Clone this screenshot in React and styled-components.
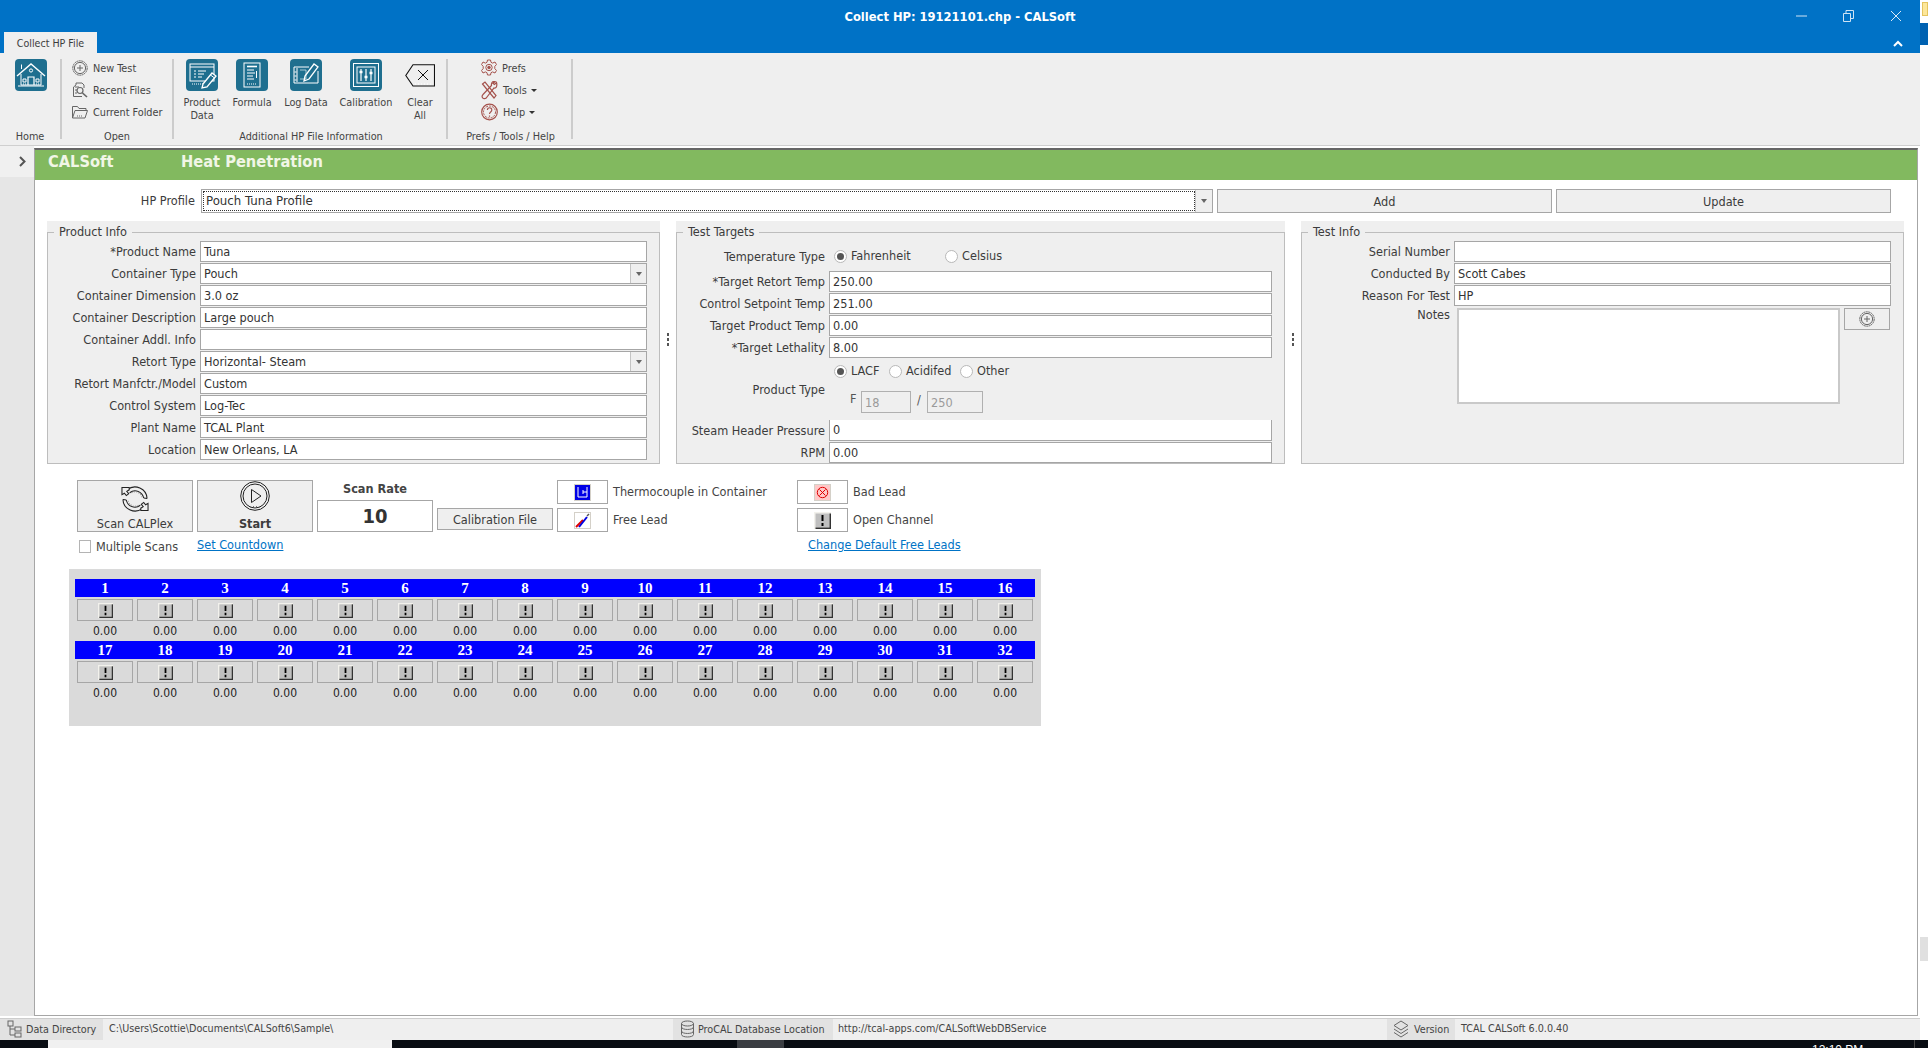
import React from "react";
import styled, { createGlobalStyle } from "styled-components";

const FONT = '"DejaVu Sans Condensed", Tahoma, "DejaVu Sans", sans-serif';

const Global = createGlobalStyle`
  html, body { margin: 0; padding: 0; background: #fff; overflow: hidden; }
  body { font-family: ${FONT}; font-size: 12.6px; color: #3c3c3c; }
  * { box-sizing: border-box; }
`;

const Desktop = styled.div`
  width: 1928px; height: 1048px; display: grid;
  grid-template-columns: 1920px 8px; grid-template-rows: 1040px 8px; overflow: hidden;
`;
const Win = styled.div`display: flex; flex-direction: column; min-height: 0;`;

/* ---------- title bar ---------- */
const Header = styled.header`height: 53px; background: #0072c6; display: flex; flex-direction: column;`;
const TitleRow = styled.div`height: 32px; display: grid; grid-template-columns: 1fr auto 1fr; align-items: center;`;
const Title = styled.div`color: #fff; font-weight: 700; font-size: 12.8px; grid-column: 2; padding-top: 1px;`;
const Controls = styled.div`display: flex; justify-content: flex-end; padding-right: 0;`;
const Ctl = styled.div`width: 47.5px; display: flex; justify-content: center; align-items: center; height: 32px;`;
const TabRow = styled.div`height: 21px; display: flex; justify-content: space-between; align-items: center; padding: 0 17px 0 4px;`;
const Tab = styled.div`width: 93px; height: 21px; background: #efefef; color: #3c3c3c; font-size: 10.6px; line-height: 22px; text-align: center;`;

/* ---------- ribbon ---------- */
const Ribbon = styled.div`
  height: 93px; background: #efefef; border-bottom: 1px solid #cfcfcf;
  display: flex; align-items: flex-start; padding-top: 6px;
`;
const Group = styled.section`
  width: ${p => p.$w}px; height: 86px; display: flex; flex-direction: column;
  background: ${p => (p.$sep ? "linear-gradient(#cccccc,#cccccc) right top / 2px 80px no-repeat" : "none")};
`;
const GroupBody = styled.div`height: 70px; display: flex; padding-left: ${p => p.$pl || 0}px; justify-content: ${p => p.$center ? "center" : "flex-start"};`;
const GroupLabel = styled.div`height: 14px; line-height: 15px; font-size: 10.8px; text-align: center; color: #444; padding-right: ${p => p.$pr || 0}px;`;
const BigItem = styled.div`width: ${p => p.$w}px; display: flex; flex-direction: column; align-items: center; font-size: 10.8px; line-height: 13px; text-align: center; color: #444;`;
const BigIcon = styled.div`height: 32px; margin-bottom: 5px; display: flex; align-items: center;`;
const MenuList = styled.div`display: flex; flex-direction: column; gap: 4px;`;
const MenuItem = styled.div`height: 18px; display: flex; align-items: center; gap: 5px; font-size: 10.8px; color: #444;`;
const Caret = styled.span`width: 0; height: 0; border: 3px solid transparent; border-top: 3px solid #333; border-bottom: 0; margin-left: -1px;`;

/* ---------- body ---------- */
const Body = styled.div`flex: 1; display: flex; min-height: 0;`;
const Sidebar = styled.aside`width: 34px; background: #e6e6e6; margin-bottom: 2px; display: flex; flex-direction: column;`;
const ExpandCell = styled.div`height: 31px; background: #f0f0f0; display: flex; align-items: center; justify-content: center; padding: 0 0 0 10px;`;
const Main = styled.main`
  width: 1884px; margin: 2px 0; border: 1px solid #a6a6a6; border-top: 2px solid #666;
  background: #fff; display: flex; flex-direction: column;
`;
const Banner = styled.div`
  height: 30px; background: #82b95f; display: flex; align-items: center; padding: 0 0 7px 13px;
  color: #f1f6e6; font-weight: 700; font-size: 16.3px;
`;
const BannerApp = styled.div`width: 133px;`;

const ProfileRow = styled.div`
  margin-top: 9px; display: grid; grid-template-columns: 162px 1012px 335px 335px; column-gap: 4px; height: 22px;
`;
const RightLabel = styled.div`
  text-align: right; color: #3c3c3c; line-height: 21px; white-space: nowrap; padding-right: ${p => p.$pr ?? 4}px;
`;
const ProfileLabel = styled(RightLabel)`line-height: 24px; padding-right: 2px;`;
const Combo = styled.div`border: 1px solid #a6a6a6; display: flex; background: #fff;`;
const ComboText = styled.div`flex: 1; border: 1px dotted #333; margin: 1px 0 1px 1px; padding-left: 2px; line-height: 18px; color: #333; font-size: 13.1px;`;
const ComboArrow = styled.div`width: 17px; background: #efefef; border-left: 1px solid #c4c4c4; display: flex; align-items: center; justify-content: center;`;
const Tri = styled.span`width: 0; height: 0; border: 3.5px solid transparent; border-top: 4px solid #666; border-bottom: 0;`;
const FlatButton = styled.button`
  font: inherit; color: #3c3c3c; background: #efefef; border: 1px solid #a6a6a6; padding: 0; margin: 0;
`;

const Panels = styled.div`
  margin-top: 10px; padding-left: 12px; height: 243px;
  display: grid; grid-template-columns: 613px 16px 609px 16px 603px;
`;
const Panel = styled.section`background: #efefef; padding-top: 3px; display: flex; min-width: 0;`;
const Fieldset = styled.fieldset`
  flex: 1; min-width: 0; margin: 0; padding: 1px 12px 0 0; border: 1px solid #bdbdbd;
  display: flex; flex-direction: column;
`;
const Legend = styled.legend`
  margin-left: 6px; padding: 0 5px; height: 16px; line-height: 16px; color: #3c3c3c;
`;
const Rows = styled.div`display: flex; flex-direction: column; gap: 1px;`;
const Row = styled.div`display: grid; grid-template-columns: 152px 1fr; height: 21px;`;
const Input = styled.div`
  border: 1px solid #a6a6a6; background: #fff; color: #333; line-height: 19px; padding-left: 3px;
  display: flex; justify-content: space-between; ${p => p.$noTop && "border-top: 0;"} white-space: nowrap; min-width: 0;
`;
const ComboCell = styled.div`width: 16px; background: #efefef; border-left: 1px solid #c4c4c4; display: flex; align-items: center; justify-content: center;`;
const RadioRow = styled.div`display: grid; grid-template-columns: 152px 1fr; height: ${p => p.$h}px; align-items: center;`;
const RadioLine = styled.div`display: flex; align-items: center; padding-left: 5px; grid-column: 2;`;
const RadioWrap = styled.label`display: flex; align-items: center; gap: 4px; width: ${p => p.$w}px; color: #3c3c3c; line-height: 14px;`;
const RadioDot = styled.span`
  width: 13px; height: 13px; border-radius: 50%; border: 1px solid #b8b8b8; background: #fff; display: flex; align-items: center; justify-content: center;
  &::after { content: ""; width: 7px; height: 7px; border-radius: 50%; background: ${p => (p.$on ? "#555" : "transparent")}; }
`;
const ProductType = styled.div`display: grid; grid-template-columns: 152px 1fr; grid-template-rows: 26px 7px 22px 7px;`;
const ProductLabel = styled(RightLabel)`grid-row: 1 / span 3; grid-column: 1; align-self: center; line-height: 14px; margin-top: 8px;`;
const FRow = styled.div`grid-row: 3; grid-column: 2; display: flex; align-items: center; padding-left: 21px; color: #555;`;
const FLetter = styled.span`width: 11px; margin-top: -7px;`;
const SmallBox = styled.div`
  width: ${p => p.$w}px; height: 22px; border: 1px solid #b0b0b0; background: #efefef; color: #9a9a9a; line-height: 22px; padding-left: 3px;
`;
const Slash = styled.span`width: 16px; text-align: center; margin-top: -5px;`;
const NotesRow = styled.div`display: grid; grid-template-columns: 152px 385px 46px; column-gap: 0; margin-top: 2px;`;
const NotesBox = styled.div`height: 96px; margin-left: 2.5px; width: 383px; border: 2px solid #c9c9c9; background: #fff;`;
const NotesLabel = styled(RightLabel)`line-height: 14px;`;
const NotesBtn = styled(FlatButton)`height: 22px; width: 46px; margin-left: 5px; display: flex; align-items: center; justify-content: center;`;
const Splitter = styled.div`display: flex; flex-direction: column; align-items: center; justify-content: center; gap: 2px; padding-bottom: 6px;`;
const SplitDot = styled.span`width: 2px; height: 3px; background: #555;`;

/* ---------- scan controls ---------- */
const ScanGrid = styled.div`
  margin: 16px 0 0 42px; display: grid; column-gap: 4px; row-gap: 4px;
  grid-template-columns: 116px 116px 116px 116px 51px 181px 51px auto; grid-template-rows: 24px 24px 20px;
`;
const BigButton = styled.button`
  grid-row: 1 / span 2; height: 52px; font: inherit; background: #efefef; border: 1px solid #a6a6a6; color: #3c3c3c;
  display: flex; flex-direction: column; align-items: center; padding: ${p => p.$pt}px 0 0; font-weight: ${p => p.$bold ? 700 : 400};
`;
const BigLabel = styled.span`line-height: 14px; margin-top: ${p => p.$mt}px;`;
const RateStack = styled.div`grid-row: 1 / span 2; display: flex; flex-direction: column; align-items: stretch;`;
const RateLabel = styled.div`text-align: center; font-weight: 700; color: #444; height: 21px; line-height: 17px;`;
const RateValue = styled.div`height: 32px; border: 1px solid #a6a6a6; text-align: center; font-weight: 700; font-size: 20px; line-height: 30px; color: #333; background: #fff;`;
const CalButton = styled(FlatButton)`grid-row: 2; grid-column: 4; height: 22px; width: 116px;`;
const LegendBox = styled.div`
  border: 1px solid #a6a6a6; background: #fff; height: 24px; display: flex; align-items: center; justify-content: center;
  grid-column: ${p => p.$c}; grid-row: ${p => p.$r};
`;
const LegendText = styled.div`grid-column: ${p => p.$c}; grid-row: ${p => p.$r}; line-height: 24px; padding-left: 1px; color: #444; white-space: nowrap;`;
const CheckLine = styled.label`grid-row: 3; grid-column: 1; display: flex; align-items: center; gap: 5px; padding-left: 2px; white-space: nowrap; color: #444;`;
const Check = styled.span`width: 12px; height: 13px; border: 1px solid #b4b4b4; background: #fff;`;
const LinkText = styled.a`
  color: #0073c6; text-decoration: underline; white-space: nowrap; line-height: 18px; grid-row: 3; grid-column: ${p => p.$c};
  padding-left: ${p => p.$pl || 0}px;
`;

const ChannelPanel = styled.div`
  margin: 13px 0 0 34px; width: 972px; height: 157px; background: #dadada; padding: 10px 6px 0;
`;
const Bank = styled.div`display: grid; grid-template-columns: repeat(16, 60px); grid-template-rows: 18px 24px 20px; height: 62px;`;
const ChHead = styled.div`
  background: #0000ff; color: #fff; font-family: "Liberation Serif", serif; font-weight: 700; font-size: 15px; line-height: 18px; text-align: center;
`;
const ChBtn = styled.button`
  margin: 2px 2px 0; height: 22px; width: 56px; padding: 0; background: #dadada; border: 1px solid #a6a6a6; display: flex; align-items: center; justify-content: center;
`;
const ChVal = styled.div`text-align: center; color: #1e1e1e; line-height: 20px; font-size: 12px;`;

/* ---------- status bar ---------- */
const Status = styled.footer`height: 22px; border-top: 1px solid #cdcdcd; background: #efefef; display: flex; font-size: 10.7px; color: #444;`;
const StatusKey = styled.div`width: ${p => p.$w}px; background: #e2e2e2; display: flex; align-items: center; gap: ${p => p.$gap || 3}px; padding: 0 0 1px ${p => p.$pl}px; white-space: nowrap;`;
const StatusVal = styled.div`width: ${p => p.$w}px; padding-left: ${p => p.$pl}px; line-height: 20px; white-space: nowrap;`;

/* ---------- right strip + taskbar ---------- */
const Strip = styled.div`display: flex; flex-direction: column; background: #fff; padding-top: 2px;`;
const Sticky = styled.div`height: 14px; margin-left: 2px; background: #fde79a; border: 1px solid #e5c45e;`;
const StripBand = styled.div`height: 22px; margin-top: 7px; background: #0062b2;`;
const StripBlock = styled.div`height: 24px; margin-top: 892px; background: #e0e0e0;`;
const Taskbar = styled.div`grid-column: 1 / span 2; height: 8px; background: #080c12; display: flex; overflow: hidden; position: relative;`;
const TaskItem = styled.div`margin-left: ${p => p.$ml}px; width: ${p => p.$w}px; background: ${p => p.$bg};`;
const Clock = styled.div`margin-left: ${p => p.$ml}px; width: 103px; color: #fff; font-size: 12px; line-height: 14px; padding-top: 3px; white-space: nowrap; border-right: 1px solid #444; font-family: "Liberation Sans", sans-serif;`;

/* ---------- icons ---------- */
const Tile = ({ children }) => (
  <svg width="32" height="32" viewBox="0 0 32 32" fill="none" stroke="#fff" strokeWidth="1">
    <rect x="0" y="0" width="32" height="32" rx="4" fill="#1f6f8f" stroke="none" />
    {children}
  </svg>
);
const HomeIcon = () => (
  <Tile>
    <path d="M2 17 16 5l14 12" strokeWidth="1.4" />
    <path d="M6.5 10V5.5M6 15v11h20V15" />
    <circle cx="16" cy="11.5" r="1.6" />
    <path d="M13 26v-8h6v8M3 27h26" strokeWidth="1.2" />
    <path d="M8 20h3v3H8zM21 20h3v3h-3z" />
    <path d="M8 25h3M21 25h3" strokeDasharray="1 1" />
  </Tile>
);
const ProductIcon = () => (
  <Tile>
    <rect x="4" y="5" width="24" height="17" />
    <path d="M4 8h24" />
    <path d="M8 12h2M8 15h2M8 18h2M12 12h8M12 15h6M12 18h4" strokeWidth="1.2" />
    <path d="M6 25h13" strokeDasharray="1 1" />
    <path d="M17 25l9-11 4 3-9 11-5 1z" fill="#1f6f8f" strokeWidth="1.3" />
    <path d="M24.5 16l4 3" />
  </Tile>
);
const FormulaIcon = () => (
  <Tile>
    <rect x="8" y="4" width="16" height="24" />
    <path d="M11 7.5h10" strokeWidth="1.6" />
    <path d="M11 11h7M11 14h8M11 17h6M11 20h7M20.5 12v7" />
    <path d="M11 25h10" strokeDasharray="1 1" />
  </Tile>
);
const LogIcon = () => (
  <Tile>
    <path d="M19 8H4v16h24V12" />
    <path d="M7 9v14M4.5 13h2M4.5 17h2M4.5 21h2" />
    <path d="M14 22l1-5 9-12 4 3-9 12z" fill="#1f6f8f" strokeWidth="1.3" />
    <path d="M10 11h6v9h-6" opacity=".6" />
  </Tile>
);
const CalIcon = () => (
  <Tile>
    <rect x="3.5" y="4.5" width="25" height="23" />
    <rect x="7" y="8" width="18" height="16" />
    <path d="M11 10v12M16 10v12M21 10v12" strokeWidth="1.2" />
    <path d="M9.5 13h3M14.5 18h3M19.5 14h3" strokeWidth="2.4" />
  </Tile>
);
const ClearIcon = () => (
  <svg width="30" height="23" viewBox="0 0 30 23" fill="none" stroke="#111">
    <path d="M29.5.7H8L.8 11.5 8 22H29.5V.7Z" strokeWidth="1.1" />
    <path d="M13 6l10 10M23 6 13 16" strokeWidth="1" />
    <path d="M10 20h17" stroke="#fff" strokeDasharray="1 2" />
  </svg>
);
const Grey = styled.svg`display: block; flex: none;`;
const NewIcon = ({ size = 16 }) => (
  <Grey width={size} height={size} viewBox="0 0 16 16" fill="none" stroke="#666">
    <circle cx="8" cy="8" r="7.2" strokeDasharray="2 .5" />
    <circle cx="8" cy="8" r="5.6" />
    <path d="M8 5v6M5 8h6" />
  </Grey>
);
const RecentIcon = () => (
  <Grey width="16" height="16" viewBox="0 0 16 16" fill="none" stroke="#666">
    <path d="M1.5 5 4 3v-2h6l2 2v3M1.5 5v9.5H10" />
    <path d="M3 5h4" />
    <circle cx="8" cy="8.5" r="3" strokeWidth="1.2" />
    <path d="M10.5 11 15 15" strokeWidth="1.6" />
    <path d="M3 8h2M3 11h2" />
  </Grey>
);
const FolderIcon = () => (
  <Grey width="16" height="16" viewBox="0 0 16 16" fill="none" stroke="#666">
    <path d="M.5 14V2.5h5l1.5 2h7v2" />
    <path d="M.5 14l2.5-7.5h12.5L13 14H.5Z" />
    <path d="M5 12h6" strokeDasharray="1 1" />
  </Grey>
);
const RED = "#a5534d";
const GearIcon = () => (
  <Grey width="16" height="18" viewBox="0 0 16 18" fill="none" stroke={RED}>
    <path d="M6.5 1h3l.5 2.3 1.6.8L14 3l1.5 2.6-1.7 1.7v2.4l1.7 1.7L14 14l-2.4-1.1-1.6.8L9.5 16h-3L6 13.7l-1.6-.8L2 14 .5 11.4l1.7-1.7V7.3L.5 5.6 2 3l2.4 1.1 1.6-.8L6.5 1Z" />
    <circle cx="8" cy="8.5" r="3.2" />
    <circle cx="8" cy="8.5" r="1.3" fill={RED} />
  </Grey>
);
const ToolsIcon = () => (
  <Grey width="17" height="19" viewBox="0 0 17 19" fill="none" stroke={RED} strokeWidth="1.2">
    <path d="M1.5 3 4 1l11 13.500-2 2.500L1.500 3Z" />
    <path d="M15.500 1.500 13.500 3.500l-1.500-1 2-2C12 0 10 1.500 10.500 4.500L2 13.500c-1.500 1.500-1 3.500.5 4s3-.5 3.500-1.500l7-9c2 .5 3.500-1.500 2.500-5.500Z" />
  </Grey>
);
const HelpIcon = () => (
  <Grey width="17" height="18" viewBox="0 0 17 18" fill="none" stroke={RED}>
    <circle cx="8.5" cy="9" r="7.8" strokeWidth="1.2" />
    <circle cx="8.5" cy="9" r="6" strokeDasharray="2 1" />
    <path d="M6.4 7c0-3 4.4-3 4.4 0 0 2-2.3 2-2.3 4M8.5 12.5v1.2" strokeWidth="1.2" />
  </Grey>
);
const ScanIcon = () => (
  <svg width="30" height="29" viewBox="0 0 30 29" fill="none" stroke="#222" strokeWidth="1.1">
    <path d="M7 5A12.500 12.500 0 0 1 27.500 14" />
    <path d="M9.500 8A9 9 0 0 1 24 13.500" />
    <path d="M24 13.500 27.500 14" />
    <path d="M11.500 8A7 7 0 0 1 22 12.500" stroke="#888" strokeDasharray="1 1.500" />
    <path d="M1.500 2.500h7.500v2.500L6.500 6.500 8.500 9 6 11 4 8.500 1.500 10Z" fill="#efefef" />
    <path d="M23 24A12.500 12.500 0 0 1 2.500 15" />
    <path d="M20.500 21A9 9 0 0 1 6 15.500" />
    <path d="M6 15.500 2.500 15" />
    <path d="M18.500 21A7 7 0 0 1 8 16.500" stroke="#888" strokeDasharray="1 1.500" />
    <path d="M28.500 26.500H21v-2.500l2.500-1.500L21.500 20l2.500-2 2 2.500 2.500-1.500Z" fill="#efefef" />
  </svg>
);
const PlayIcon = () => (
  <svg width="30" height="30" viewBox="0 0 30 30" fill="none" stroke="#222">
    <circle cx="15" cy="15" r="14.3" />
    <circle cx="15" cy="15" r="12" />
    <path d="M11.500 8.500v13L21 15l-9.500-6.500Z" />
    <path d="M10 25.500h10" stroke="#777" strokeDasharray="1 2" />
  </svg>
);
const LegendTile = styled.svg`display: block;`;
const ThermoIcon = () => (
  <LegendTile width="17" height="17" viewBox="0 0 17 17">
    <rect width="17" height="17" fill="#d4d0c8" />
    <rect x="1" y="1" width="15" height="15" fill="#0000e6" />
    <path d="M4 3v10h9V3M13 8H9M9 6v4" fill="none" stroke="#fff" strokeWidth="1" />
  </LegendTile>
);
const FreeIcon = () => (
  <LegendTile width="17" height="17" viewBox="0 0 17 17">
    <rect width="17" height="17" fill="#d4d0c8" />
    <rect x="1" y="1" width="15" height="15" fill="#fff" />
    <path d="M2 15 9 8" stroke="#e00000" strokeWidth="2" />
    <path d="M5 15 13 5" stroke="#0000e0" strokeWidth="2" />
    <path d="M13 4 15 2" stroke="#555" strokeWidth="1.5" />
  </LegendTile>
);
const BadIcon = () => (
  <LegendTile width="17" height="17" viewBox="0 0 17 17">
    <rect width="17" height="17" fill="#d4d0c8" />
    <rect x="1" y="1" width="15" height="15" fill="#ffc8c8" />
    <circle cx="8.500" cy="8.500" r="5.200" fill="none" stroke="#e00000" />
    <path d="M5.500 5.500l6 6M11.500 5.500l-6 6" stroke="#e00000" />
  </LegendTile>
);
const OpenIcon = ({ size = 17 }) => (
  <LegendTile width={size} height={size} viewBox="0 0 17 17">
    <rect width="17" height="17" fill="#f2f1ec" />
    <rect x="1.500" y="1.500" width="14" height="14" fill="#bfbfbf" />
    <rect x="15.500" y="1.500" width="1.500" height="15.500" fill="#333" />
    <rect x="1.500" y="15.500" width="15.500" height="1.500" fill="#333" />
    <path d="M8.500 3v6M8.500 11v3" stroke="#000" strokeWidth="2" />
  </LegendTile>
);
const TreeIcon = () => (
  <Grey width="15" height="18" viewBox="0 0 15 18" fill="none" stroke="#666">
    <rect x="1" y="1" width="5" height="5" />
    <rect x="8" y="7" width="6" height="4" />
    <rect x="8" y="13" width="6" height="4" />
    <path d="M3 6v9h5M3 9h5" />
  </Grey>
);
const DbIcon = () => (
  <Grey width="15" height="18" viewBox="0 0 15 18" fill="none" stroke="#666">
    <ellipse cx="7.500" cy="3.500" rx="6" ry="2.500" />
    <path d="M1.500 3.500v11c0 3.300 12 3.300 12 0v-11M1.500 7c0 3.300 12 3.300 12 0M1.500 11c0 3.300 12 3.300 12 0" />
  </Grey>
);
const StackIcon = () => (
  <Grey width="16" height="18" viewBox="0 0 16 18" fill="none" stroke="#666">
    <path d="M8 1 15 5.500 8 10 1 5.500 8 1Z" />
    <path d="M1 9l7 4.500L15 9M1 12.500 8 17l7-4.500" />
  </Grey>
);
const ChevronRight = () => (
  <svg width="7" height="11" viewBox="0 0 7 11" fill="none" stroke="#555" strokeWidth="2"><path d="M1 1l4.500 4.500L1 10" /></svg>
);

/* ---------- data ---------- */
const product = [
  ["*Product Name", "Tuna"], ["Container Type", "Pouch", true], ["Container Dimension", "3.0 oz"],
  ["Container Description", "Large pouch"], ["Container Addl. Info", ""], ["Retort Type", "Horizontal- Steam", true],
  ["Retort Manfctr./Model", "Custom"], ["Control System", "Log-Tec"], ["Plant Name", "TCAL Plant"], ["Location", "New Orleans, LA"],
];
const targets = [["*Target Retort Temp", "250.00"], ["Control Setpoint Temp", "251.00"], ["Target Product Temp", "0.00"], ["*Target Lethality", "8.00"]];
const info = [["Serial Number", ""], ["Conducted By", "Scott Cabes"], ["Reason For Test", "HP"]];

const FieldRow = ({ label, value, combo, noTop }) => (
  <Row>
    <RightLabel>{label}</RightLabel>
    <Input $noTop={noTop}>
      <span>{value}</span>
      {combo && <ComboCell><Tri /></ComboCell>}
    </Input>
  </Row>
);
const Radio = ({ on, w, children }) => (
  <RadioWrap $w={w}><RadioDot $on={on} />{children}</RadioWrap>
);
const Split = () => (
  <Splitter><SplitDot /><SplitDot /><SplitDot /></Splitter>
);
const ChannelBank = ({ from }) => {
  const ids = Array.from({ length: 16 }, (_, i) => from + i);
  return (
    <Bank>
      {ids.map(n => <ChHead key={n}>{n}</ChHead>)}
      {ids.map(n => <ChBtn key={n}><OpenIcon size={15} /></ChBtn>)}
      {ids.map(n => <ChVal key={n}>0.00</ChVal>)}
    </Bank>
  );
};

export default function App() {
  return (
    <>
      <Global />
      <Desktop>
        <Win>
          <Header>
            <TitleRow>
              <Title>Collect HP: 19121101.chp - CALSoft</Title>
              <Controls>
                <Ctl><svg width="11" height="2"><path d="M0 1h11" stroke="#cfe3f4" /></svg></Ctl>
                <Ctl><svg width="11" height="12" fill="none" stroke="#cfe3f4"><path d="M.5 3.500h7v8h-7zM3 3.500V.5h7.500v8H8" /></svg></Ctl>
                <Ctl><svg width="12" height="12" fill="none" stroke="#dbeaf7"><path d="M1 1l10 10M11 1 1 11" /></svg></Ctl>
              </Controls>
            </TitleRow>
            <TabRow>
              <Tab>Collect HP File</Tab>
              <svg width="10" height="8" fill="none" stroke="#fff" strokeWidth="2"><path d="M1 7l4-4 4 4" /></svg>
            </TabRow>
          </Header>
          <Ribbon>
            <Group $w={62} $sep>
              <GroupBody $center><HomeIcon /></GroupBody>
              <GroupLabel $pr={2}>Home</GroupLabel>
            </Group>
            <Group $w={112} $sep>
              <GroupBody $pl={10}>
                <MenuList>
                  <MenuItem><NewIcon />New Test</MenuItem>
                  <MenuItem><RecentIcon />Recent Files</MenuItem>
                  <MenuItem><FolderIcon />Current Folder</MenuItem>
                </MenuList>
              </GroupBody>
              <GroupLabel $pr={2}>Open</GroupLabel>
            </Group>
            <Group $w={274} $sep>
              <GroupBody>
                <BigItem $w={56}><BigIcon><ProductIcon /></BigIcon>Product<br />Data</BigItem>
                <BigItem $w={44}><BigIcon><FormulaIcon /></BigIcon>Formula</BigItem>
                <BigItem $w={64}><BigIcon><LogIcon /></BigIcon>Log Data</BigItem>
                <BigItem $w={56}><BigIcon><CalIcon /></BigIcon>Calibration</BigItem>
                <BigItem $w={52}><BigIcon><ClearIcon /></BigIcon>Clear<br />All</BigItem>
              </GroupBody>
              <GroupLabel>Additional HP File Information</GroupLabel>
            </Group>
            <Group $w={125} $sep>
              <GroupBody $pl={33}>
                <MenuList>
                  <MenuItem><GearIcon />Prefs</MenuItem>
                  <MenuItem><ToolsIcon />Tools <Caret /></MenuItem>
                  <MenuItem><HelpIcon />Help <Caret /></MenuItem>
                </MenuList>
              </GroupBody>
              <GroupLabel>Prefs / Tools / Help</GroupLabel>
            </Group>
          </Ribbon>
          <Body>
            <Sidebar><ExpandCell><ChevronRight /></ExpandCell></Sidebar>
            <Main>
              <Banner><BannerApp>CALSoft</BannerApp>Heat Penetration</Banner>
              <ProfileRow>
                <ProfileLabel>HP Profile</ProfileLabel>
                <Combo>
                  <ComboText>Pouch Tuna Profile</ComboText>
                  <ComboArrow><Tri /></ComboArrow>
                </Combo>
                <FlatButton>Add</FlatButton>
                <FlatButton>Update</FlatButton>
              </ProfileRow>

              <Panels>
                <Panel>
                  <Fieldset>
                    <Legend>Product Info</Legend>
                    <Rows>
                      {product.map(([l, v, c]) => <FieldRow key={l} label={l} value={v} combo={c} />)}
                    </Rows>
                  </Fieldset>
                </Panel>
                <Split />
                <Panel>
                  <Fieldset>
                    <Legend>Test Targets</Legend>
                    <RadioRow $h={30}>
                      <RightLabel>Temperature Type</RightLabel>
                      <RadioLine>
                        <Radio on w={111}>Fahrenheit</Radio>
                        <Radio w={80}>Celsius</Radio>
                      </RadioLine>
                    </RadioRow>
                    <Rows>
                      {targets.map(([l, v]) => <FieldRow key={l} label={l} value={v} />)}
                    </Rows>
                    <ProductType>
                      <RadioLine>
                        <Radio on w={55}>LACF</Radio>
                        <Radio w={71}>Acidifed</Radio>
                        <Radio w={60}>Other</Radio>
                      </RadioLine>
                      <ProductLabel>Product Type</ProductLabel>
                      <FRow>
                        <FLetter>F</FLetter>
                        <SmallBox $w={50}>18</SmallBox>
                        <Slash>/</Slash>
                        <SmallBox $w={56}>250</SmallBox>
                      </FRow>
                    </ProductType>
                    <Rows>
                      <FieldRow label="Steam Header Pressure" value="0" noTop />
                      <FieldRow label="RPM" value="0.00" />
                    </Rows>
                  </Fieldset>
                </Panel>
                <Split />
                <Panel>
                  <Fieldset>
                    <Legend>Test Info</Legend>
                    <Rows>
                      {info.map(([l, v]) => <FieldRow key={l} label={l} value={v} />)}
                    </Rows>
                    <NotesRow>
                      <NotesLabel>Notes</NotesLabel>
                      <NotesBox />
                      <NotesBtn><NewIcon /></NotesBtn>
                    </NotesRow>
                  </Fieldset>
                </Panel>
              </Panels>

              <ScanGrid>
                <BigButton $pt={4}><ScanIcon /><BigLabel $mt={4}>Scan CALPlex</BigLabel></BigButton>
                <BigButton $pt={0} $bold><PlayIcon /><BigLabel $mt={6}>Start</BigLabel></BigButton>
                <RateStack>
                  <RateLabel>Scan Rate</RateLabel>
                  <RateValue>10</RateValue>
                </RateStack>
                <CalButton>Calibration File</CalButton>
                <LegendBox $c={5} $r={1}><ThermoIcon /></LegendBox>
                <LegendText $c={6} $r={1}>Thermocouple in Container</LegendText>
                <LegendBox $c={7} $r={1}><BadIcon /></LegendBox>
                <LegendText $c={8} $r={1}>Bad Lead</LegendText>
                <LegendBox $c={5} $r={2}><FreeIcon /></LegendBox>
                <LegendText $c={6} $r={2}>Free Lead</LegendText>
                <LegendBox $c={7} $r={2}><OpenIcon /></LegendBox>
                <LegendText $c={8} $r={2}>Open Channel</LegendText>
                <CheckLine><Check />Multiple Scans</CheckLine>
                <LinkText $c={2}>Set Countdown</LinkText>
                <LinkText $c={"7 / span 2"} $pl={11}>Change Default Free Leads</LinkText>
              </ScanGrid>

              <ChannelPanel>
                <ChannelBank from={1} />
                <ChannelBank from={17} />
              </ChannelPanel>
            </Main>
          </Body>
          <Status>
            <StatusKey $w={103} $pl={7} $gap={4}><TreeIcon />Data Directory</StatusKey>
            <StatusVal $w={570} $pl={6}>{"C:\\Users\\Scottie\\Documents\\CALSoft6\\Sample\\"}</StatusVal>
            <StatusKey $w={160} $pl={7}><DbIcon />ProCAL Database Location</StatusKey>
            <StatusVal $w={554} $pl={5}>http://tcal-apps.com/CALSoftWebDBService</StatusVal>
            <StatusKey $w={68} $pl={6} $gap={5}><StackIcon />Version</StatusKey>
            <StatusVal $w={300} $pl={6}>TCAL CALSoft 6.0.0.40</StatusVal>
          </Status>
        </Win>
        <Strip>
          <Sticky />
          <StripBand />
          <StripBlock />
        </Strip>
        <Taskbar>
          <TaskItem $ml={48} $w={344} $bg="#f0f0f0" />
          <TaskItem $ml={345} $w={47} $bg="#3a3d42" />
          <Clock $ml={1028}>12:10 PM</Clock>
        </Taskbar>
      </Desktop>
    </>
  );
}
